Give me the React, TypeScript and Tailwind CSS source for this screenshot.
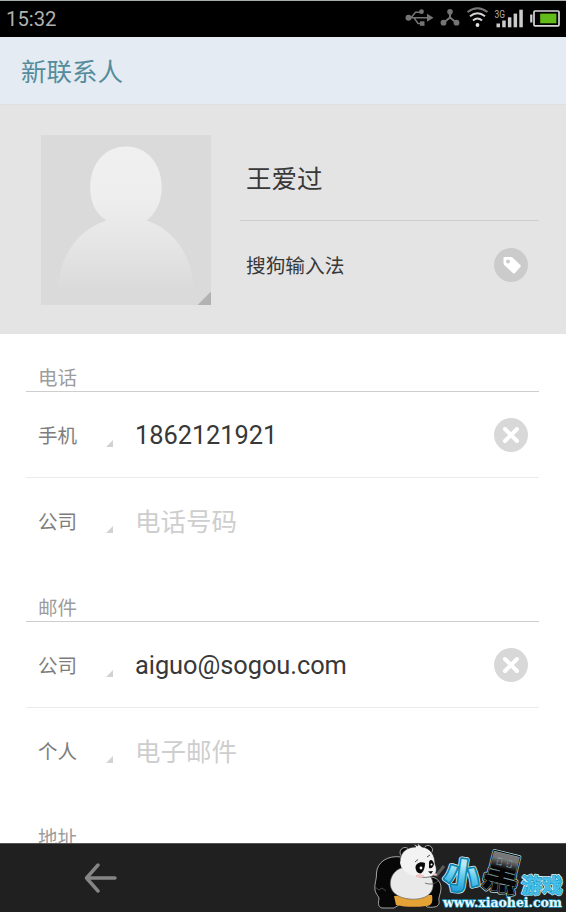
import React from 'react';

interface Field {
  label: string;
  value?: string;
  hint?: string;
}

interface Section {
  title: string;
  fields: Field[];
}

const sections: Section[] = [
  {
    title: '电话',
    fields: [
      { label: '手机', value: '1862121921' },
      { label: '公司', hint: '电话号码' },
    ],
  },
  {
    title: '邮件',
    fields: [
      { label: '公司', value: 'aiguo@sogou.com' },
      { label: '个人', hint: '电子邮件' },
    ],
  },
  { title: '地址', fields: [] },
];

const StatusIcons: React.FC = () => (
  <svg width="170" height="36" viewBox="0 0 170 36" className="block">
    {/* USB */}
    <g stroke="#747474" strokeWidth="1.5" fill="none">
      <path d="M12 16.8H32M15 16.8L19.5 11.2H24M18 16.8L22 22.5H26" />
    </g>
    <g fill="#747474">
      <circle cx="12.5" cy="16.8" r="3" />
      <path d="M31 12.8L37.5 16.8L31 20.8Z" />
      <circle cx="25.5" cy="10.7" r="2.4" />
      <rect x="24" y="20.3" width="4.5" height="4.5" />
    </g>
    {/* Tethering */}
    <path d="M54 11V16.5L47.5 21.7M54 16.5L60.5 21.7" stroke="#747474" strokeWidth="2" fill="none" />
    <g fill="#747474">
      <circle cx="54" cy="10.8" r="2.8" />
      <circle cx="47.5" cy="21.7" r="2.9" />
      <circle cx="60.5" cy="21.7" r="2.9" />
    </g>
    {/* Wifi */}
    <g fill="none" strokeWidth="2">
      <path d="M71.5 11Q81.5 3.5 91.5 11" stroke="#777" />
      <path d="M74 15.3Q81.5 9.3 89 15.3" stroke="#d4d4d4" />
      <path d="M77 19.5Q81.5 15.5 86 19.5" stroke="#d4d4d4" />
    </g>
    <circle cx="81.5" cy="24" r="1.9" fill="#e2e2e2" />
    {/* Signal */}
    <text x="98.5" y="16.5" fontSize="10" fill="#b0b0b0" textLength="10.5" lengthAdjust="spacingAndGlyphs">
      3G
    </text>
    <g fill="#cbcbcb">
      <rect x="100.5" y="22.5" width="3.5" height="3.8" />
      <rect x="106.2" y="19.5" width="3.5" height="6.8" />
      <rect x="111.9" y="16.3" width="3.5" height="10" />
      <rect x="117.6" y="12.6" width="3.5" height="13.7" />
      <rect x="123.3" y="8.7" width="3.5" height="17.6" />
    </g>
    {/* Battery */}
    <rect x="138" y="10" width="25" height="14.8" rx="1" fill="none" stroke="#d8d8d8" strokeWidth="1.7" />
    <rect x="134.2" y="13.5" width="2.2" height="8" fill="#d8d8d8" />
    <rect x="144.2" y="12.6" width="16.2" height="9.7" fill="#62bd19" />
  </svg>
);

const Avatar: React.FC = () => (
  <svg width="170" height="170" viewBox="0 0 171 171" className="block shrink-0">
    <defs>
      <linearGradient id="person" gradientUnits="userSpaceOnUse" x1="0" y1="11" x2="0" y2="158">
        <stop offset="0" stopColor="#f0f0f0" />
        <stop offset="0.36" stopColor="#eeeeee" />
        <stop offset="0.7" stopColor="#e4e4e4" />
        <stop offset="1" stopColor="#dadada" />
      </linearGradient>
    </defs>
    <rect width="171" height="171" fill="#dadada" />
    <path
      d="M66 86C54 79 49.5 66 49.5 53C49.5 28 65 11.5 85.5 11.5C106 11.5 121.5 28 121.5 53C121.5 66 116 79 106 86C135 95 153 123 154 158H17C18 123 36 95 66 86Z"
      fill="url(#person)"
    />
    <path d="M157.5 171L171 157.5V171Z" fill="#b2b2b2" />
  </svg>
);

const TagButton: React.FC = () => (
  <svg width="34" height="34" viewBox="0 0 34 34" className="block">
    <circle cx="17" cy="17" r="17" fill="#cbcbcb" />
    <path
      d="M10.3 9H17Q18 9 18.8 9.7L26.5 17.2Q27.3 18 26.5 18.8L20.8 25.3Q20 26.1 19.2 25.3L10.2 17Q9.5 16.3 9.5 15.3V9.8Q9.5 9 10.3 9Z"
      fill="#fff"
    />
    <circle cx="14" cy="13.5" r="2" fill="#cbcbcb" />
  </svg>
);

const ClearButton: React.FC = () => (
  <svg width="34" height="34" viewBox="0 0 34 34" className="block">
    <circle cx="17" cy="17" r="17" fill="#d8d8d8" />
    <path d="M11 11L23 23M23 11L11 23" stroke="#fff" strokeWidth="4" strokeLinecap="round" />
  </svg>
);

const FieldRow: React.FC<{ field: Field; last: boolean }> = ({ field, last }) => (
  <div className={`flex h-[86px] items-center pl-3 pr-[11px] border-b ${last ? 'border-transparent' : 'border-[#ebebeb]'}`}>
    <span className="w-[68px] pt-1 text-[19.5px] leading-none text-[#7d7d7d]">{field.label}</span>
    <svg width="7" height="7" viewBox="0 0 7 7" className="mt-[18px] shrink-0">
      <path d="M0 7L7 0V7Z" fill="#d2d2d2" />
    </svg>
    {field.value ? (
      <span className="ml-[22px] flex-1 pt-[3px] text-[25.4px] leading-none tracking-[-0.05px] text-[#383838]">{field.value}</span>
    ) : (
      <span className="ml-[22px] flex-1 pt-[5px] text-[25.5px] leading-none text-[#cecece]">{field.hint}</span>
    )}
    {field.value && <ClearButton />}
  </div>
);

const PandaLogo: React.FC = () => (
  <svg width="200" height="77" viewBox="0 0 200 77" className="absolute right-0 bottom-0">
    <defs>
      <linearGradient id="ice" x1="0" y1="0" x2="0" y2="1">
        <stop offset="0.2" stopColor="#b8e8f8" />
        <stop offset="0.5" stopColor="#5fc8ee" />
        <stop offset="0.9" stopColor="#1a99d6" />
      </linearGradient>
      <linearGradient id="coal" x1="0" y1="0" x2="0" y2="1">
        <stop offset="0.2" stopColor="#777" />
        <stop offset="0.4" stopColor="#050505" />
      </linearGradient>
    </defs>
    <path d="M70 41L78 31" stroke="#5c5c5c" strokeWidth="3" />
    {/* Panda */}
    <g stroke="#c8c8c8" strokeWidth="0.8">
      <path d="M35 22C22 20 11 27 10.5 38C11 44 8 49 9 55C10 60 13 61 13 64C12 68 12 72 16 73H28L36 68V30Z" fill="#070707" />
      <path d="M64 42C70 42 75 46 75 53C75 59 72 62 73 66C74 71 70 73 61 72L56 66Z" fill="#070707" />
      <circle cx="39" cy="17.5" r="5" fill="#090909" />
      <circle cx="62" cy="15" r="4.5" fill="#090909" />
    </g>
    <path d="M28 61C37 60 58 60 66 60C67 67 66 71 60 71C49 72.5 39 72 30 70Z" fill="#e3a136" />
    <path d="M35 33C25 37 23 47 25 53C28 62 41 65 51 64C62 63 68 57 67 48C66 40 58 34 49 34Z" fill="#e9e9e9" stroke="#555" strokeWidth="0.6" />
    <path d="M34 27C34 17 41 12 50 12L47 9L52 11L51 8L56 12C65 13 69 21 69 29C72 36 70 41 63 42C51 43 35 39 34 27Z" fill="#f3f3f3" />
    <path d="M34 27C34 17 41 12 50 12L47 9L52 11L51 8L56 12C65 13 69 21 69 29C72 36 70 41 63 42C58 43 54 42 50 41" fill="none" stroke="#222" strokeWidth="0.6" />
    <path d="M49.5 33C49 29 54 26 59 28C59 34 57 38 54 38.5C51 38 50 36 49.5 33Z" fill="#080808" />
    <path d="M63 28C63 24 67 24 68 29C67 33 65 34 63 33Z" fill="#080808" />
    <circle cx="55" cy="33" r="1.4" fill="#fff" />
    <circle cx="65.5" cy="29.5" r="1" fill="#fff" />
    <path d="M62 36.5L67 36L65 39Z" fill="#090909" />
    <path d="M49 27L52 24.5M61 22L64 20" stroke="#222" strokeWidth="0.8" />
    <ellipse cx="54" cy="41" rx="4" ry="1.8" fill="#f4c5c5" />
    <ellipse cx="69" cy="39.5" rx="1.8" ry="1.3" fill="#f4c5c5" />
    <path d="M9 52L13 55L16 53L20 56M59 48C64 50 69 49 72 46" fill="none" stroke="#555" strokeWidth="0.8" />
    {/* Name */}
    <g fontWeight="900" strokeLinejoin="round" textAnchor="middle">
      <g transform="rotate(8 96 40)">
        <text x="96" y="53.5" fontSize="35" fill="#e7f7fc" stroke="#e7f7fc" strokeWidth="5">小</text>
        <text x="96" y="53.5" fontSize="35" fill="url(#ice)" stroke="#0d87ae" strokeWidth="3.6" paintOrder="stroke">小</text>
      </g>
      <g transform="translate(136 38) rotate(14) scale(0.84 1)">
        <text x="0" y="15.5" fontSize="42" fill="#bfe8f3" stroke="#bfe8f3" strokeWidth="4.6">黑</text>
        <text x="0" y="15.5" fontSize="42" fill="#0c0c0c" stroke="#0c0c0c" strokeWidth="3.2">黑</text>
        <text x="0" y="15.5" fontSize="42" fill="url(#coal)" stroke="#8fb4be" strokeWidth="0.9" paintOrder="stroke">黑</text>
      </g>
      <text x="176" y="57.5" fontSize="20.5" fill="#d8f3fb" stroke="#d8f3fb" strokeWidth="2.4">游戏</text>
      <text x="176" y="57.5" fontSize="20.5" fontWeight="700" fill="#48bee8" stroke="#0d9cc7" strokeWidth="1.2" paintOrder="stroke">游戏</text>
    </g>
    <text
      x="77"
      y="71.5"
      fontSize="12.5"
      fontWeight="700"
      className="font-['DejaVu_Serif','Liberation_Serif',serif]"
      fill="#e8f8fd"
      stroke="#168eb4"
      strokeWidth="1.3"
      paintOrder="stroke"
      textLength="119"
      lengthAdjust="spacingAndGlyphs"
    >
      www.xiaohei.com
    </text>
  </svg>
);

const App: React.FC = () => {
  return (
    <div className="relative flex h-[912px] w-[566px] flex-col overflow-hidden bg-white font-[Roboto,'Noto_Sans_CJK_SC',sans-serif]">
      {/* Status bar */}
      <header className="flex h-[37px] shrink-0 justify-between border-t border-[#a5adaf] bg-black">
        <span className="pl-1.5 pt-[6px] text-[20.3px] leading-6 text-[#b0b0b0]">15:32</span>
        <StatusIcons />
      </header>

      <div className="flex h-[67px] shrink-0 items-center bg-[#e4ebf2] pl-[21px] pt-[5px]">
        <h1 className="text-[25.5px] leading-none text-[#558c9c]">新联系人</h1>
      </div>

      {/* Photo and name */}
      <section className="flex h-[230px] shrink-0 border-t border-[#dfdfdf] bg-[#e4e4e4] pl-[41px] pr-[27px] pt-[30px]">
        <Avatar />
        <div className="ml-[29px] flex-1">
          <div className="flex h-[86px] items-center border-b border-[#cdcdcd] pl-1.5 pt-1 text-[25.5px] leading-none text-[#383838]">
            王爱过
          </div>
          <div className="flex h-[88px] items-center justify-between pl-1.5 pr-[11px] text-[19.7px] leading-none text-[#383838]">
            <span className="pt-[3px]">搜狗输入法</span>
            <TagButton />
          </div>
        </div>
      </section>

      <main className="flex-1 overflow-hidden pl-[26px] pr-[27px]">
        {sections.map((section) => (
          <section key={section.title}>
            <h2 className="flex h-[58px] items-end border-b border-[#cecece] pb-[3px] pl-3 text-[19.5px] leading-none text-[#9c9c9c]">
              {section.title}
            </h2>
            {section.fields.map((field, i) => (
              <FieldRow key={field.label} field={field} last={i === section.fields.length - 1} />
            ))}
          </section>
        ))}
      </main>

      {/* Navigation bar */}
      <nav className="flex h-[69px] shrink-0 items-center border-t border-[#545454] bg-[#202020] pl-[84px]">
        <svg width="34" height="30" viewBox="0 0 34 30" fill="none" stroke="#858585" strokeWidth="3.4" strokeLinecap="round" strokeLinejoin="round">
          <path d="M14 2L2.5 15L14 28M2.5 15H31" />
        </svg>
      </nav>
      <PandaLogo />
    </div>
  );
};

export default App;
